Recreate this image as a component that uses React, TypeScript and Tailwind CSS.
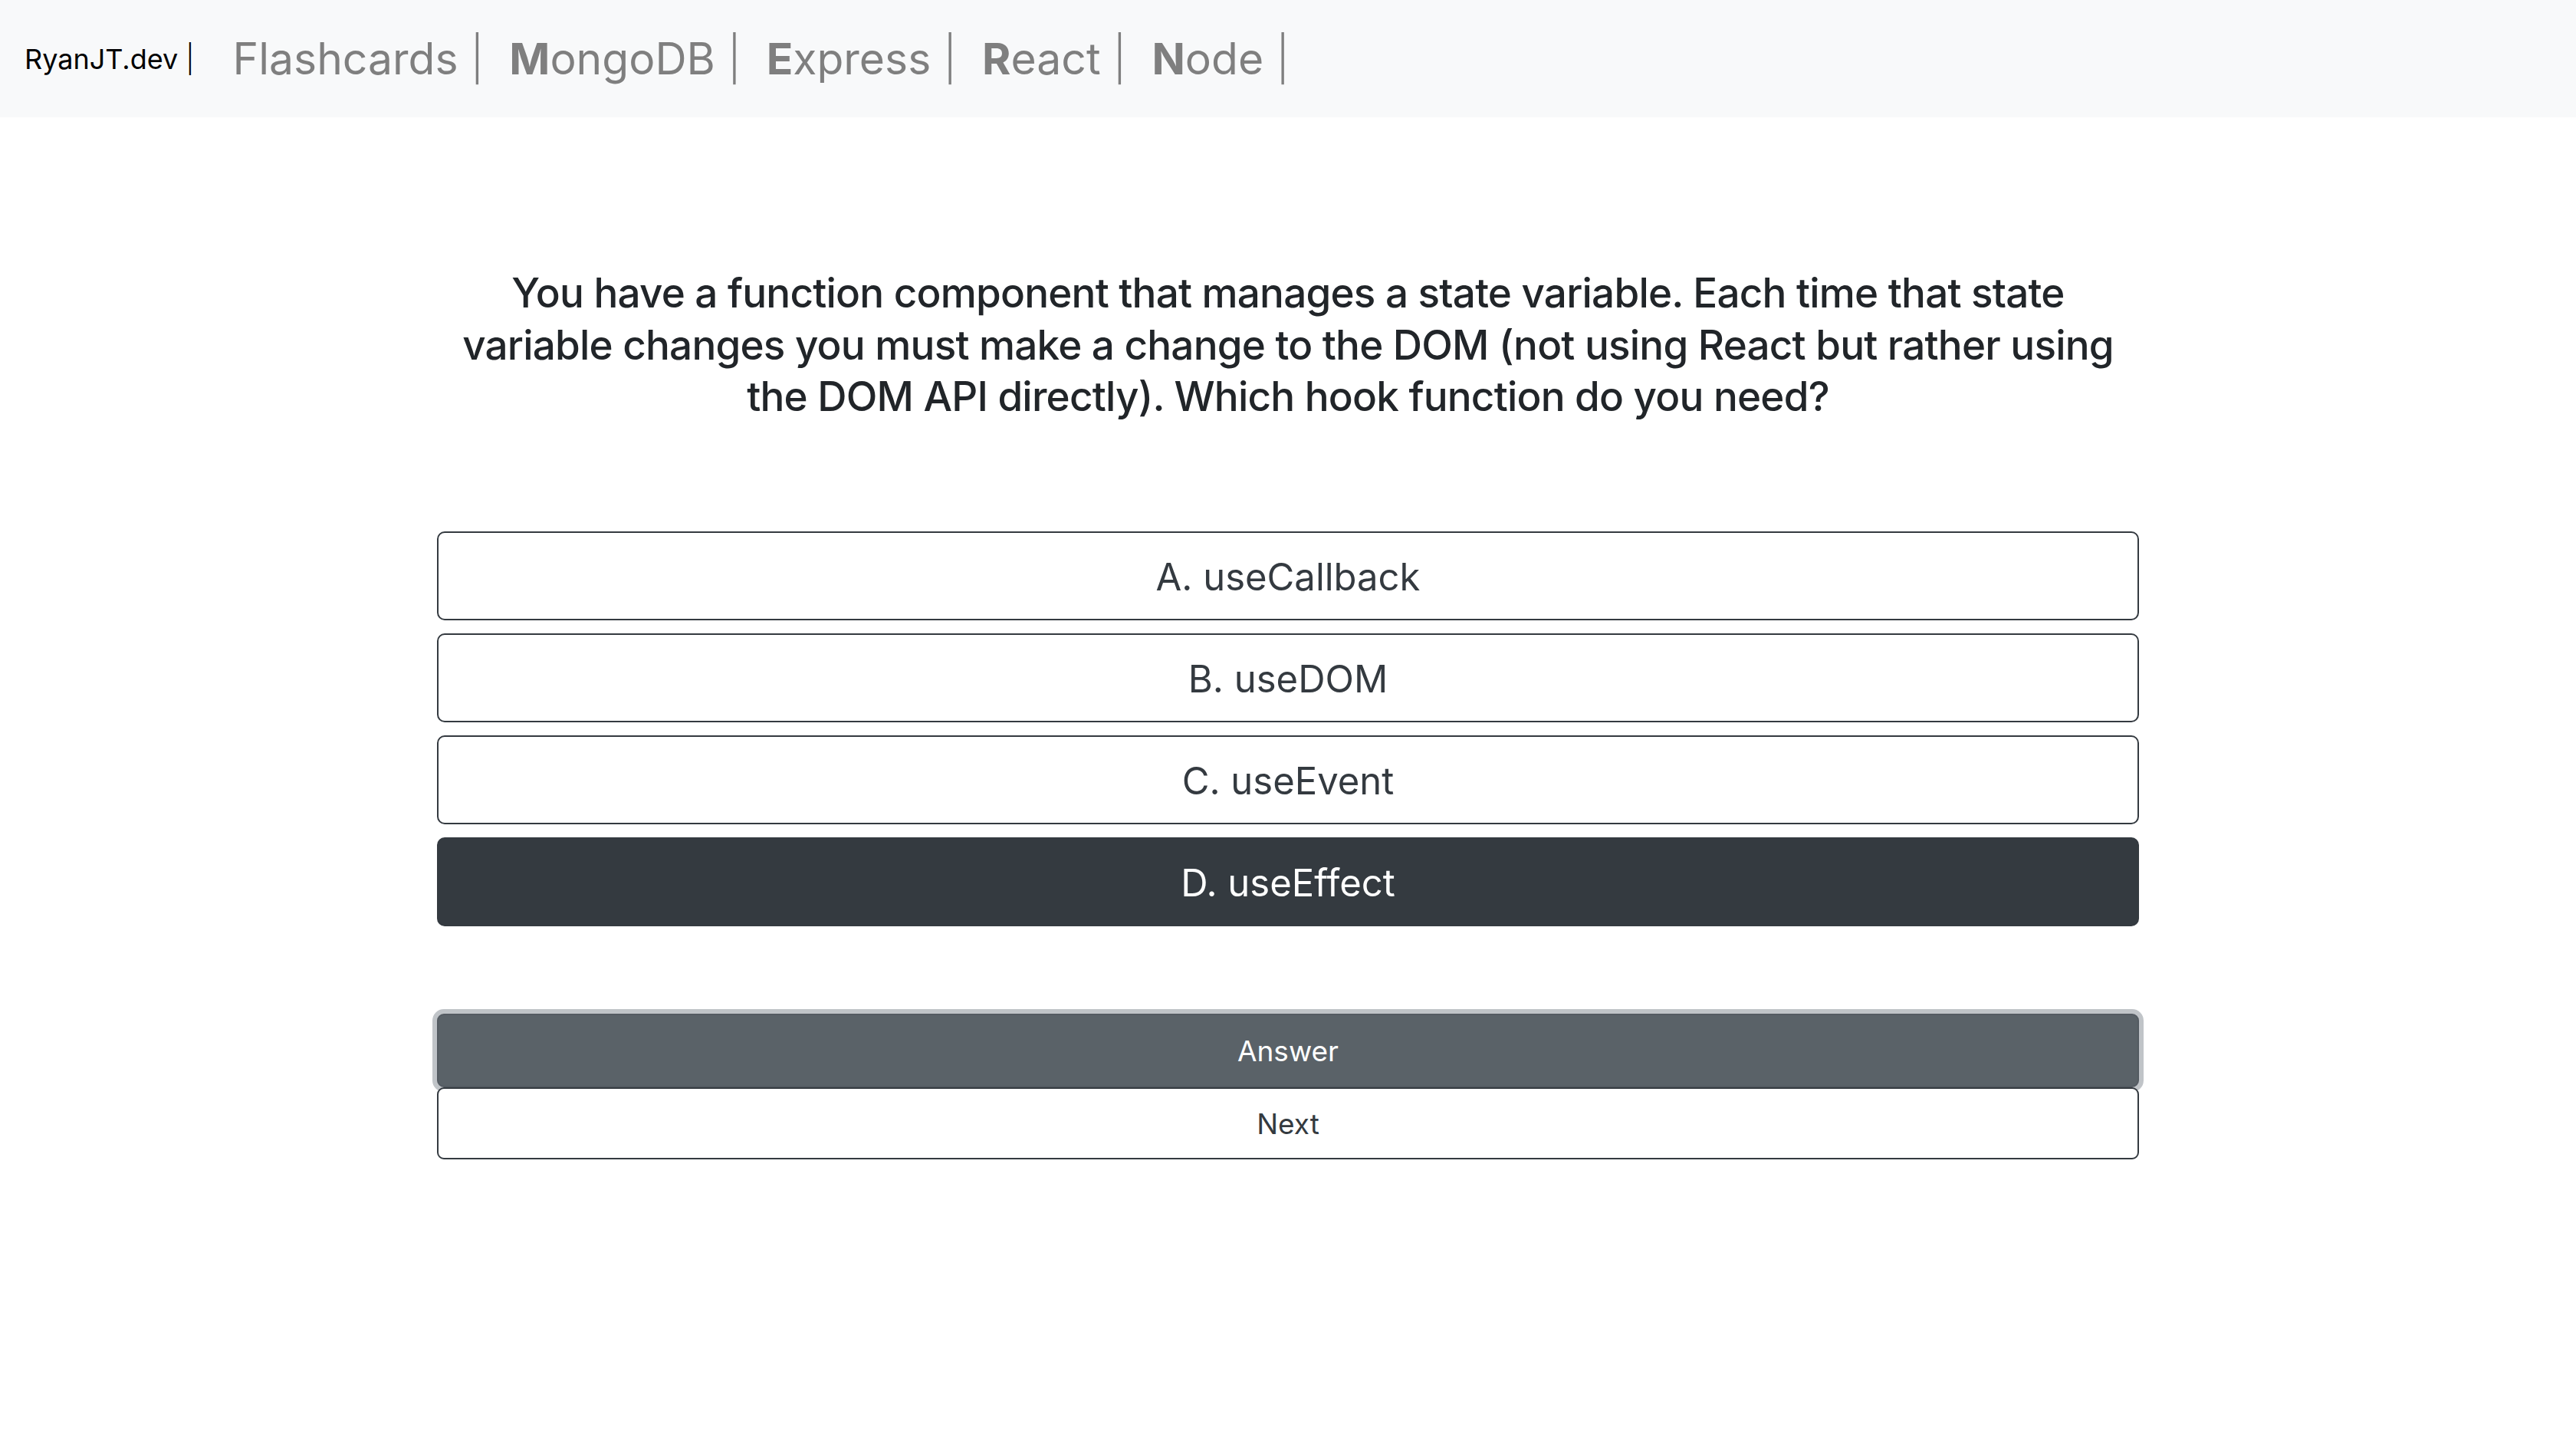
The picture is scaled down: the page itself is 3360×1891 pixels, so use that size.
import React from "react";

const navItems = [
  { first: "", rest: "Flashcards" },
  { first: "M", rest: "ongoDB" },
  { first: "E", rest: "xpress" },
  { first: "R", rest: "eact" },
  { first: "N", rest: "ode" },
];

const options = ["A. useCallback", "B. useDOM", "C. useEvent", "D. useEffect"];

function Navbar() {
  return (
    <nav className="flex h-[153px] items-center bg-[#f8f9fa] pl-[32px]">
      <a href="#" className="mr-[50px] text-[36px] leading-none text-black">
        RyanJT.dev <span className="font-light">|</span>
      </a>
      <div className="flex items-center gap-[33px] text-[57px] leading-none text-[#7f7f7f]">
        {navItems.map((item) => (
          <a key={item.rest} href="#" className="whitespace-nowrap">
            {item.first && <span className="font-bold">{item.first}</span>}
            {item.rest} <span className="font-light">|</span>
          </a>
        ))}
      </div>
    </nav>
  );
}

export default function App() {
  const selected = 3;

  return (
    <div className="min-h-screen bg-white font-['Inter',sans-serif] text-[#212529]">
      <Navbar />
      <main className="mx-auto w-[2220px]">
        <h4 className="mt-[196px] whitespace-nowrap text-center text-[53px] font-medium leading-[67.5px] tracking-[-0.015em] text-[#212529]">
          You have a function component that manages a state variable. Each time that state
          <br />
          variable changes you must make a change to the DOM (not using React but rather using
          <br />
          the DOM API directly). Which hook function do you need?
        </h4>

        <div className="mt-[141px] flex flex-col gap-[17px]">
          {options.map((opt, i) => (
            <button
              key={opt}
              className={
                i === selected
                  ? "h-[116px] w-full rounded-[10px] border-2 border-[#343a40] bg-[#343a40] pt-[4px] text-[49px] text-white"
                  : "h-[116px] w-full rounded-[10px] border-2 border-[#343a40] bg-white pt-[4px] text-[49px] text-[#343a40]"
              }
            >
              {opt}
            </button>
          ))}
        </div>

        <div className="mt-[114px] flex flex-col">
          <button className="h-[96px] w-full rounded-[9px] border-2 border-[#545b62] bg-[#5a6268] pt-[2px] text-[37px] text-white shadow-[0_0_0_6px_rgba(130,138,145,0.5)]">
            Answer
          </button>
          <button className="h-[94px] w-full rounded-[9px] border-2 border-[#343a40] bg-white pt-[2px] text-[37px] text-[#343a40]">
            Next
          </button>
        </div>
      </main>
    </div>
  );
}
